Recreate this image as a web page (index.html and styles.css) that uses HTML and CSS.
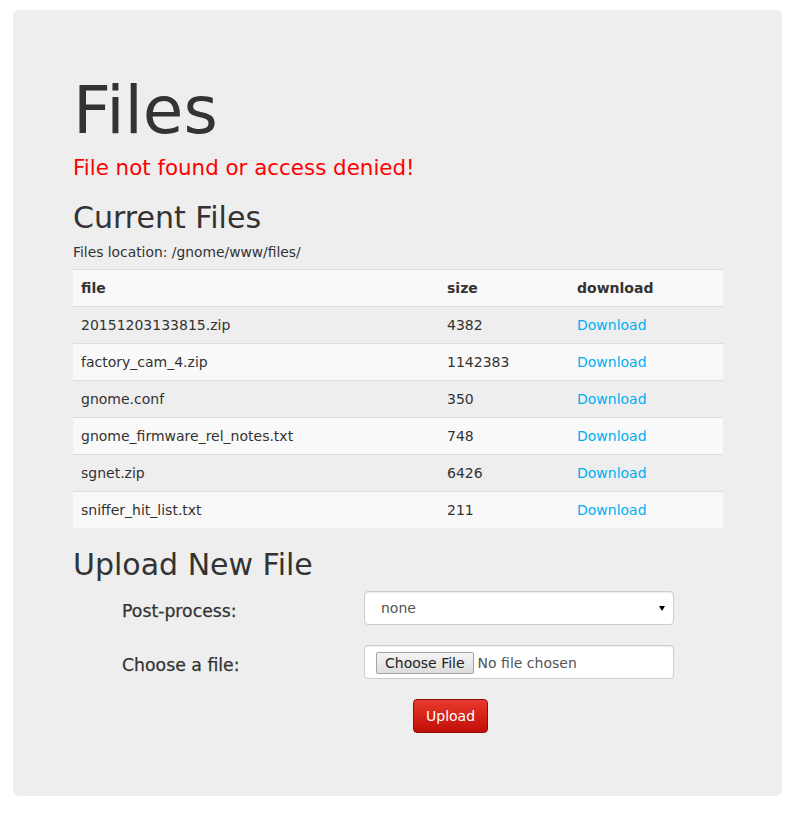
FILE: index.html
```html
<!DOCTYPE html>
<html>
<head>
<meta charset="utf-8">
<title>Files</title>
<link rel="stylesheet" href="styles.css">
</head>
<body>
<div class="jumbotron">
  <h1 class="title">Files</h1>
  <p class="error">File not found or access denied!</p>
  <h2 class="section">Current Files</h2>
  <p class="location">Files location: /gnome/www/files/</p>
  <table class="files">
    <thead>
      <tr><th class="c-file">file</th><th class="c-size">size</th><th class="c-dl">download</th></tr>
    </thead>
    <tbody>
      <tr><td>20151203133815.zip</td><td>4382</td><td><a href="#">Download</a></td></tr>
      <tr><td>factory_cam_4.zip</td><td>1142383</td><td><a href="#">Download</a></td></tr>
      <tr><td>gnome.conf</td><td>350</td><td><a href="#">Download</a></td></tr>
      <tr><td>gnome_firmware_rel_notes.txt</td><td>748</td><td><a href="#">Download</a></td></tr>
      <tr><td>sgnet.zip</td><td>6426</td><td><a href="#">Download</a></td></tr>
      <tr><td>sniffer_hit_list.txt</td><td>211</td><td><a href="#">Download</a></td></tr>
    </tbody>
  </table>
  <h2 class="section upload-title">Upload New File</h2>
  <form class="upload-form">
    <label class="control-label" for="pp">Post-process:</label>
    <select id="pp" class="form-control select"><option>none</option></select>
    <label class="control-label" for="ff">Choose a file:</label>
    <input id="ff" type="file" class="form-control file">
    <div class="actions"><button type="button" class="btn-upload">Upload</button></div>
  </form>
</div>
</body>
</html>
```
FILE: styles.css
```css
html, body {
  margin: 0;
  padding: 0;
  background: #fff;
}
body {
  font-family: "DejaVu Sans", sans-serif;
  font-size: 14px;
  line-height: 20px;
  color: #333;
}
.jumbotron {
  margin: 10px 15px 0 13px;
  padding: 48px 59px 63px 60px;
  background: #eee;
  border-radius: 6px;
}
.title {
  margin: 18px 0 0;
  font-size: 66px;
  line-height: 69px;
  font-weight: normal;
}
.error {
  margin: 8px 0 0;
  font-size: 21.4px;
  line-height: 30px;
  color: #f00;
}
.section {
  margin: 18px 0 0;
  font-size: 30px;
  line-height: 33px;
  font-weight: normal;
}
.location {
  margin: 8px 0 0;
  font-size: 13.85px;
}
.files {
  margin-top: 7px;
  width: 650px;
  border-collapse: collapse;
  border-spacing: 0;
}
.files th, .files td {
  text-align: left;
  padding: 8px;
  line-height: 20px;
  border-top: 1px solid #ddd;
}
.files th {
  font-weight: bold;
  background: #f9f9f9;
}
.files tbody tr:nth-child(even) td {
  background: #f9f9f9;
}
.c-file { width: 350px; }
.c-size { width: 114px; }
.files a {
  color: #00aff0;
  text-decoration: none;
}
.upload-title {
  margin-top: 20px;
}
.upload-form {
  margin-top: 10px;
  display: grid;
  grid-template-columns: 242px 310px;
  row-gap: 20px;
  padding-left: 49px;
}
.control-label {
  font-size: 17.3px;
  line-height: 20px;
  padding-top: 10px;
  color: #333;
  -webkit-text-stroke: 0.25px #333;
}
.form-control {
  box-sizing: border-box;
  width: 310px;
  height: 34px;
  padding: 6px 12px;
  font-family: "DejaVu Sans", sans-serif;
  font-size: 14px;
  line-height: 20px;
  color: #555;
  background-color: #fff;
  border: 1px solid #ccc;
  border-radius: 4px;
  box-shadow: inset 0 1px 1px rgba(0,0,0,0.075);
  margin: 0;
}
.select {
  -webkit-appearance: none;
  appearance: none;
  padding-left: 16px;
  background-image: url("data:image/svg+xml,%3Csvg xmlns='http://www.w3.org/2000/svg' width='6' height='5'%3E%3Cpath d='M0 0H6L3 5Z' fill='%23000'/%3E%3C/svg%3E");
  background-repeat: no-repeat;
  background-position: right 8px center;
  background-size: 6px 5px;
}
.file {
  padding: 6px 11px;
}
.file::file-selector-button {
  font-family: "DejaVu Sans", sans-serif;
  font-size: 14px;
  height: 22px;
  margin: 0 4px 0 0;
  padding: 0 8px;
  color: #222;
  background: linear-gradient(to bottom, #f4f4f4, #dddddd);
  border: 1px solid #a3a3a3;
  border-radius: 2px;
}
.actions {
  grid-column: 2;
  padding-left: 49px;
}
.btn-upload {
  height: 34px;
  padding: 6px 12px;
  font-family: "DejaVu Sans", sans-serif;
  font-size: 14px;
  line-height: 20px;
  color: #fff;
  background: linear-gradient(to bottom, #e8392e 0%, #c10f07 100%);
  border: 1px solid #8c0e07;
  border-radius: 4px;
  cursor: pointer;
}
```
